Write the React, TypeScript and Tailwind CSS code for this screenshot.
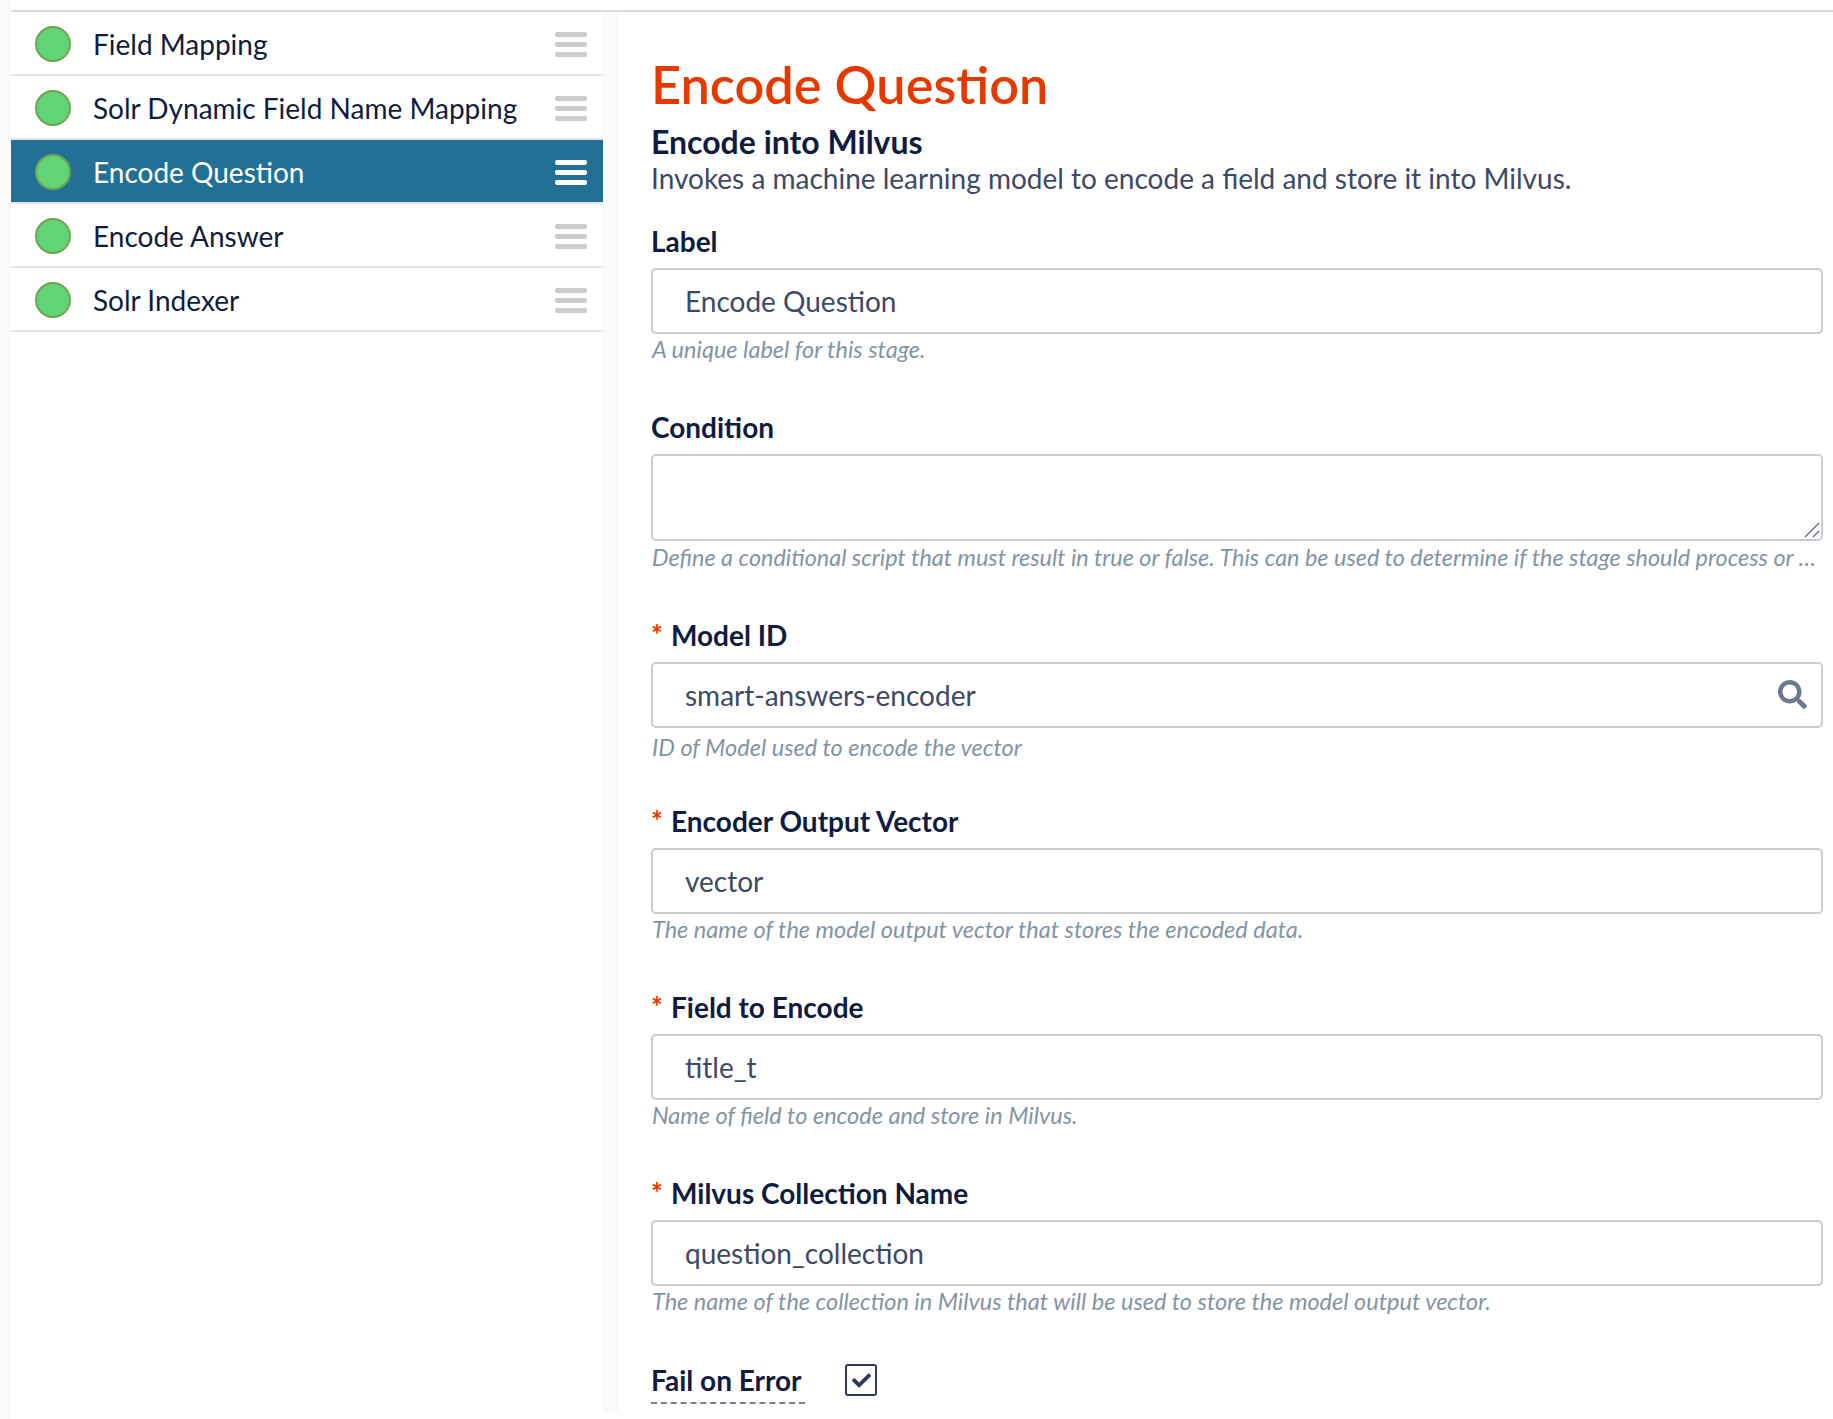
import React from 'react';
import { FaCheck, FaSearch } from 'react-icons/fa';

const stages = ['Field Mapping', 'Solr Dynamic Field Name Mapping', 'Encode Question', 'Encode Answer', 'Solr Indexer'];

function StageRow({ name, active }: { name: string; active: boolean }) {
  return (
    <div className="h-16 border-b-2 border-[#e6e6e6] flex items-center">
      <div className={`flex items-center w-full pl-6 pr-[16px] pt-[2px] h-full ${active ? 'bg-[#237096] text-white' : 'text-[#0f1c3f]'}`}>
        <span className="w-9 h-9 rounded-full bg-[#63d475] border-2 border-[#6ba84f] shrink-0" />
        <span className="ml-[22px] -mt-[1px] flex-1 text-[28px] leading-none">{name}</span>
        <span className="flex flex-col gap-[5px] w-8">
          <i className={`block h-[5px] rounded-[2px] ${active ? 'bg-white' : 'bg-[#cccccc]'}`} />
          <i className={`block h-[5px] rounded-[2px] ${active ? 'bg-white' : 'bg-[#cccccc]'}`} />
          <i className={`block h-[5px] rounded-[2px] ${active ? 'bg-white' : 'bg-[#cccccc]'}`} />
        </span>
      </div>
    </div>
  );
}

function Field({ label, required, value, help, search }: { label: string; required?: boolean; value: string; help: string; search?: boolean }) {
  return (
    <div className={search ? 'mb-[36px]' : 'mb-[40px]'}>
      <div className="h-[43px] mb-[6px] flex items-center text-[28px] font-bold text-[#0f1c3f]">
        {required && <span className="text-[#e63900] text-[28px] font-bold w-5 -mt-[2px]">*</span>}
        {label}
      </div>
      <div className="relative">
        <input
          readOnly
          value={value}
          className="w-full h-[66px] px-[32px] border-2 border-[#cccccc] rounded-[5px] text-[28px] text-[#3d4966] outline-none bg-white"
        />
        {search && <FaSearch className="absolute right-[16px] top-[18px] w-[29px] h-[29px] text-[#6c7a91]" />}
      </div>
      <div className={`h-[31px] pl-px flex items-center text-[23.5px] italic text-[#8494a4] whitespace-nowrap ${search ? 'mt-[4px]' : ''}`}>{help}</div>
    </div>
  );
}

export default function App() {
  return (
    <div className="font-['Lato',sans-serif] bg-white w-[1833px] h-[1419px] overflow-hidden flex">
      <div className="w-[11px] h-full bg-[#fafafa] shrink-0" />
      <div className="flex-1 min-w-0">
        <div className="h-[10px]" />
        <div className="border-t-2 border-[#d9dbe3]" />
        <div className="flex">
          <div className="w-[608px] h-[1400px] bg-[#fafafa] pr-[16px] shrink-0">
            <div className="bg-white h-full">
              {stages.map((s) => (
                <StageRow key={s} name={s} active={s === 'Encode Question'} />
              ))}
            </div>
          </div>
          <div className="flex-1 min-w-0 pl-[32px] pr-[10px] pt-[42px]">
            <h1 className="text-[52.3px] leading-[60px] text-[#e63900] font-semibold">Encode Question</h1>
            <h2 className="text-[32px] leading-[40px] mt-[8px] font-bold text-[#0f1c3f]">Encode into Milvus</h2>
            <p className="text-[28px] leading-[32px] text-[#3d4966] mb-[25px]">
              Invokes a machine learning model to encode a field and store it into Milvus.
            </p>
            <Field label="Label" value="Encode Question" help="A unique label for this stage." />
            <div className="mb-[40px]">
              <div className="h-[43px] mb-[6px] flex items-center text-[28px] font-bold text-[#0f1c3f]">Condition</div>
              <div className="relative">
                <textarea readOnly className="block w-full h-[87px] px-[32px] py-3 border-2 border-[#cccccc] rounded-[5px] text-[28px] outline-none bg-white resize-none" />
                <svg className="absolute right-[3px] bottom-[3px] w-[16px] h-[16px]" viewBox="0 0 16 16" fill="none" stroke="#5f6675" strokeWidth="1.2">
                  <path d="M1 15 L15 1" />
                  <path d="M9 15 L15 9" />
                </svg>
              </div>
              <div className="h-[31px] pl-px mt-[1px] flex items-center text-[23.4px] italic text-[#8494a4] whitespace-nowrap">
                Define a conditional script that must result in true or false. This can be used to determine if the stage should process or …
              </div>
            </div>
            <Field required label="Model ID" value="smart-answers-encoder" help="ID of Model used to encode the vector" search />
            <Field required label="Encoder Output Vector" value="vector" help="The name of the model output vector that stores the encoded data." />
            <Field required label="Field to Encode" value="title_t" help="Name of field to encode and store in Milvus." />
            <Field required label="Milvus Collection Name" value="question_collection" help="The name of the collection in Milvus that will be used to store the model output vector." />
            <div className="flex items-start pt-[3px]">
              <span className="text-[28px] font-bold leading-[40px] text-[#0f1c3f] border-b-2 border-dashed border-[#7c8296] w-[154px] h-[44px]">Fail on Error</span>
              <span className="ml-[40px] mt-[4px] w-8 h-8 border-[2.5px] border-[#2f3a5c] rounded-[3px] flex items-center justify-center">
                <FaCheck className="w-[19px] h-[19px] text-[#2f3a5c]" />
              </span>
            </div>
          </div>
        </div>
      </div>
    </div>
  );
}
